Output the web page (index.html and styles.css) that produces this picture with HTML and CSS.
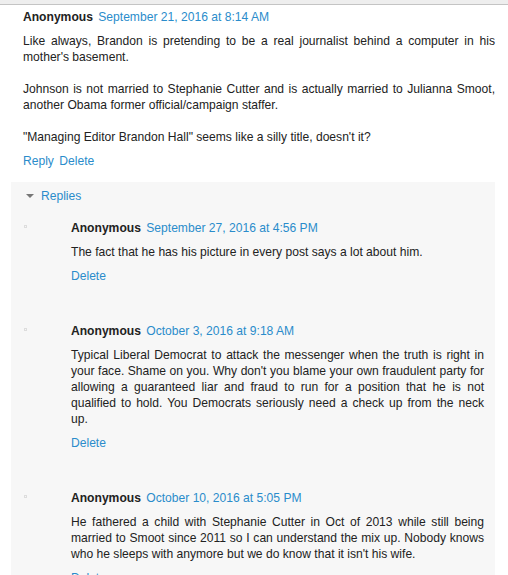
FILE: index.html
```html
<!DOCTYPE html>
<html lang="en">
<head>
  <meta charset="UTF-8">
  <title>Comments</title>
  <link rel="stylesheet" href="styles.css">
</head>
<body>
  <div class="topbar"></div>

  <div class="comments">
    <div class="comment main">
      <div class="comment-header">
        <span class="user">Anonymous</span>
        <a class="date" href="#">September 21, 2016 at 8:14 AM</a>
      </div>
      <p class="comment-content">Like always, Brandon is pretending to be a real journalist behind a computer in his mother's basement.<br><br>Johnson is not married to Stephanie Cutter and is actually married to Julianna Smoot, another Obama former official/campaign staffer.<br><br>"Managing Editor Brandon Hall" seems like a silly title, doesn't it?</p>
      <div class="comment-actions">
        <a href="#">Reply</a>
        <a href="#">Delete</a>
      </div>
    </div>

    <div class="replies">
      <div class="replies-toggle">
        <span class="caret"></span>
        <a href="#">Replies</a>
      </div>

      <div class="comment reply first">
        <span class="avatar"></span>
        <div class="comment-header">
          <span class="user">Anonymous</span>
          <a class="date" href="#">September 27, 2016 at 4:56 PM</a>
        </div>
        <p class="comment-content">The fact that he has his picture in every post says a lot about him.</p>
        <div class="comment-actions">
          <a href="#">Delete</a>
        </div>
      </div>

      <div class="comment reply">
        <span class="avatar"></span>
        <div class="comment-header">
          <span class="user">Anonymous</span>
          <a class="date" href="#">October 3, 2016 at 9:18 AM</a>
        </div>
        <p class="comment-content">Typical Liberal Democrat to attack the messenger when the truth is right in your face. Shame on you. Why don't you blame your own fraudulent party for allowing a guaranteed liar and fraud to run for a position that he is not qualified to hold. You Democrats seriously need a check up from the neck up.</p>
        <div class="comment-actions">
          <a href="#">Delete</a>
        </div>
      </div>

      <div class="comment reply">
        <span class="avatar"></span>
        <div class="comment-header">
          <span class="user">Anonymous</span>
          <a class="date" href="#">October 10, 2016 at 5:05 PM</a>
        </div>
        <p class="comment-content">He fathered a child with Stephanie Cutter in Oct of 2013 while still being married to Smoot since 2011 so I can understand the mix up. Nobody knows who he sleeps with anymore but we do know that it isn't his wife.</p>
        <div class="comment-actions">
          <a href="#">Delete</a>
        </div>
      </div>
    </div>
  </div>
</body>
</html>
```

FILE: styles.css
```css
body {
  font-family: "Liberation Sans", Arial, sans-serif;
  font-size: 12.1px;
  line-height: 16px;
  color: #222222;
  background: #ffffff;
  margin: 0;
}
a {
  color: #2a8ccb;
  text-decoration: none;
}
.topbar {
  height: 4px;
  background: #eeeeee;
  border-bottom: 1px solid #c4c4c4;
}
.comments {
  margin: 4px 13px 0 11px;
}
.comment {
  position: relative;
}
.comment.main {
  padding-left: 12px;
}
.comment-header .user {
  font-weight: bold;
  margin-right: 2px;
}
.comment-content {
  margin: 8px 0 0;
  text-align: justify;
}
.comment-actions {
  margin-top: 8px;
}
.comment-actions a {
  margin-right: 2px;
}
.replies {
  margin-top: 13px;
  background: #f7f7f7;
  padding: 6px 11px 40px 60px;
  min-height: 400px;
}
.replies-toggle {
  margin-left: -45px;
  display: flex;
  align-items: center;
}
.caret {
  width: 0;
  height: 0;
  border-left: 4px solid transparent;
  border-right: 4px solid transparent;
  border-top: 4px solid #777777;
  margin-right: 7px;
  margin-top: -1px;
}
.comment.reply {
  margin-top: 39px;
}
.comment.reply.first {
  margin-top: 16px;
}
.avatar {
  position: absolute;
  left: -47px;
  top: 5px;
  width: 1px;
  height: 1px;
  border: 1px solid #dddddd;
}
```
